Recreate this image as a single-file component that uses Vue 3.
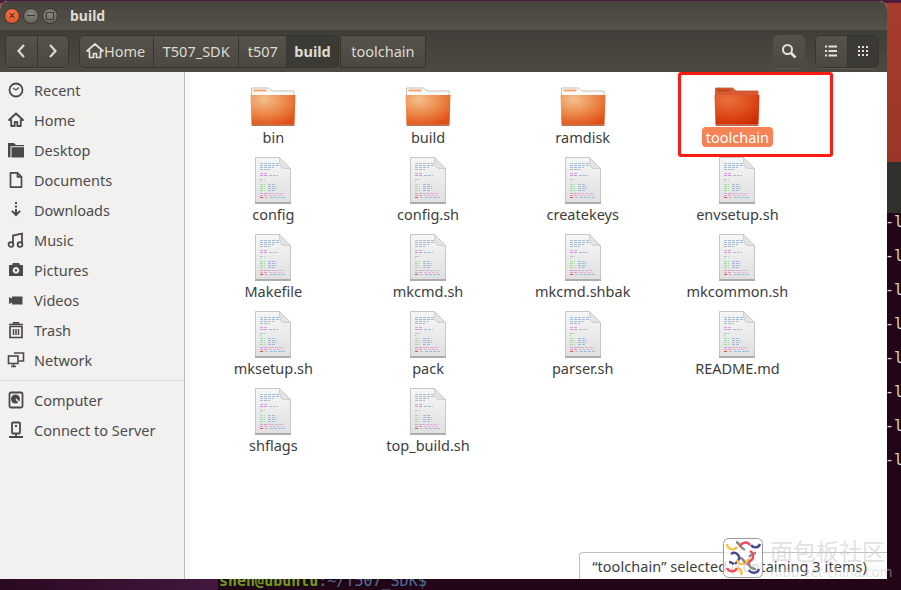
<script setup>
const places = [
  { name: 'Recent', icon: 'clock' },
  { name: 'Home', icon: 'home' },
  { name: 'Desktop', icon: 'desktop' },
  { name: 'Documents', icon: 'document' },
  { name: 'Downloads', icon: 'download' },
  { name: 'Music', icon: 'music' },
  { name: 'Pictures', icon: 'camera' },
  { name: 'Videos', icon: 'video' },
  { name: 'Trash', icon: 'trash' },
  { name: 'Network', icon: 'network' },
];
const devices = [
  { name: 'Computer', icon: 'disk' },
  { name: 'Connect to Server', icon: 'server' },
];
const crumbs = ['T507_SDK', 't507', 'build', 'toolchain'];

const files = [
  { name: 'bin', type: 'folder' },
  { name: 'build', type: 'folder' },
  { name: 'ramdisk', type: 'folder' },
  { name: 'toolchain', type: 'folder', selected: true },
  { name: 'config', type: 'doc' },
  { name: 'config.sh', type: 'doc' },
  { name: 'createkeys', type: 'doc' },
  { name: 'envsetup.sh', type: 'doc' },
  { name: 'Makefile', type: 'doc' },
  { name: 'mkcmd.sh', type: 'doc' },
  { name: 'mkcmd.shbak', type: 'doc' },
  { name: 'mkcommon.sh', type: 'doc' },
  { name: 'mksetup.sh', type: 'doc' },
  { name: 'pack', type: 'doc' },
  { name: 'parser.sh', type: 'doc' },
  { name: 'README.md', type: 'doc' },
  { name: 'shflags', type: 'doc' },
  { name: 'top_build.sh', type: 'doc' },
];

// little coloured code lines on the text file icon
const codeLines = [
  [5, 6, 20, '#a9bdd2'], [5, 8, 20, '#a3bbd6'], [5, 10, 14, '#a3bbd6'], [5, 12, 10, '#aeb8c6'],
  [5, 16, 8, '#dba0e0'], [5, 18, 8, '#d890de'], [14, 18, 9, '#a3bbd6'],
  [5, 22, 5, '#b8c4b8'], [5, 24, 1, '#a0d0a0'],
  [5, 27, 5, '#a5dca5'], [13, 27, 8, '#a3bbd6'], [5, 29, 5, '#a5dca5'], [13, 29, 9, '#a3bbd6'],
  [5, 31, 5, '#a5dca5'], [13, 31, 9, '#a3bbd6'], [5, 33, 5, '#a5dca5'], [13, 33, 8, '#a3bbd6'],
  [5, 36, 10, '#d8a0c4'], [16, 36, 13, '#d8b0d8'], [5, 38, 8, '#d8a0c4'], [14, 38, 14, '#eeb0d8'],
  [5, 40, 4, '#e85050'], [10, 40, 4, '#c0c0c0'], [15, 40, 15, '#98c0dc'],
];
const termRows = 8;
</script>

<template>
  <div class="desktop">
    <div class="wall-red"></div>
    <div class="wall-grey"></div>
    <div class="terminal">
      <div v-for="n in termRows" :key="n" class="term-row">-l</div>
    </div>
    <div class="prompt"><span class="p-user">shen@ubuntu</span><span class="p-path">:~/T507_SDK$</span></div>
    <div class="corner"></div>

    <div class="window">
      <header class="titlebar">
        <div class="dots">
          <span class="dot close">×</span>
          <span class="dot"><i class="minus"></i></span>
          <span class="dot"><i class="square"></i></span>
        </div>
        <span class="title">build</span>
      </header>

      <div class="toolbar">
        <div class="group nav">
          <button class="tool nav-btn">
            <svg width="12" height="16" viewBox="0 0 12 16"><path d="M9 2 3.500 8 9 14" fill="none" stroke="#dcd9d0" stroke-width="2.200"/></svg>
          </button>
          <button class="tool nav-btn">
            <svg width="12" height="16" viewBox="0 0 12 16"><path d="M3 2 8.500 8 3 14" fill="none" stroke="#dcd9d0" stroke-width="2.200"/></svg>
          </button>
        </div>
        <div class="crumbs">
          <div class="crumb home-crumb">
            <svg width="18" height="16" viewBox="0 0 18 16"><path d="M9 1 1 8h2.500v6.500h4v-4h3v4h4V8H17Z" fill="none" stroke="#e4e1d8" stroke-width="1.700" stroke-linejoin="round"/></svg>
            <span>Home</span>
          </div>
          <div
            v-for="c in crumbs"
            :key="c"
            class="crumb"
            :class="{ current: c === 'build', tail: c === 'toolchain' }"
          >{{ c }}</div>
        </div>
        <div class="spacer"></div>
        <button class="group tool search">
          <svg width="16" height="16" viewBox="0 0 16 16"><circle cx="6.500" cy="6.500" r="4.500" fill="none" stroke="#e4e1d8" stroke-width="2"/><path d="m10 10 4.500 4.500" stroke="#e4e1d8" stroke-width="2.600"/></svg>
        </button>
        <div class="group views">
          <button class="tool view">
            <svg width="12" height="12" viewBox="0 0 12 12" fill="#e4e1d8"><rect y="0.500" width="2" height="2"/><rect x="3.500" y="0.500" width="8.500" height="2"/><rect y="5" width="2" height="2"/><rect x="3.500" y="5" width="8.500" height="2"/><rect y="9.500" width="2" height="2"/><rect x="3.500" y="9.500" width="8.500" height="2"/></svg>
          </button>
          <button class="tool view active">
            <svg width="12" height="12" viewBox="0 0 12 12" fill="#e4e1d8"><rect x="1" y="1" width="2" height="2"/><rect x="5" y="1" width="2" height="2"/><rect x="9" y="1" width="2" height="2"/><rect x="1" y="5" width="2" height="2"/><rect x="5" y="5" width="2" height="2"/><rect x="9" y="5" width="2" height="2"/><rect x="1" y="9" width="2" height="2"/><rect x="5" y="9" width="2" height="2"/><rect x="9" y="9" width="2" height="2"/></svg>
          </button>
        </div>
      </div>

      <div class="body">
        <aside class="sidebar">
          <div v-for="p in places" :key="p.name" class="place">
            <svg class="place-icon" width="18" height="18" viewBox="0 0 18 18">
              <g v-if="p.icon === 'clock'">
                <circle cx="9" cy="9" r="6.500" fill="none" stroke="#4a4a4a" stroke-width="1.800"/>
                <path d="M9 9 6 7M9 9l3-2.500" stroke="#4a4a4a" stroke-width="1.200" fill="none"/>
              </g>
              <path v-else-if="p.icon === 'home'" d="M9 2.500 2 9h2.200v6h3.500v-4h2.600v4h3.500V9H16Z" fill="none" stroke="#4a4a4a" stroke-width="1.800" stroke-linejoin="round"/>
              <g v-else-if="p.icon === 'desktop'" fill="#4a4a4a">
                <path d="M1 2h6l2 2h8v1.200H3.500v11H1Z"/>
                <rect x="4.500" y="6.200" width="12.500" height="10.300"/>
              </g>
              <path v-else-if="p.icon === 'document'" d="M3.500 1.800h7l4 4v10.400h-11Zm7 0v4h4" fill="none" stroke="#4a4a4a" stroke-width="1.700" stroke-linejoin="round"/>
              <g v-else-if="p.icon === 'download'" fill="#4a4a4a">
                <rect x="8" y="1" width="2" height="2"/><rect x="8" y="4.500" width="2" height="2"/>
                <path d="M8 8h2v3.500l2.500-2.300 1.300 1.300L9 15.500 4.200 10.500l1.300-1.300L8 11.500Z"/>
              </g>
              <g v-else-if="p.icon === 'music'">
                <path d="M6 13V4.500l9-2V13" fill="none" stroke="#4a4a4a" stroke-width="1.800"/>
                <circle cx="4" cy="13.500" r="2.400" fill="none" stroke="#4a4a4a" stroke-width="1.800"/>
                <circle cx="13" cy="13.500" r="2.400" fill="none" stroke="#4a4a4a" stroke-width="1.800"/>
              </g>
              <path v-else-if="p.icon === 'camera'" fill="#4a4a4a" fill-rule="evenodd" d="M2 4h3l1-2h6l1 2h3v11H2ZM9 6a3.300 3.300 0 1 0 .001 0Zm0 2a1.300 1.300 0 1 1-.001 0Z"/>
              <path v-else-if="p.icon === 'video'" fill="#4a4a4a" d="M2 6l3 1.500V5.500h10.500v8H5v-2L2 13Z"/>
              <g v-else-if="p.icon === 'trash'">
                <path d="M3 5.500h12v11H3Z" fill="none" stroke="#4a4a4a" stroke-width="1.700"/>
                <path d="M2 3.500h14M6.500 3.500V1.800h5v1.700M6.500 8v6M9 8v6M11.500 8v6" fill="none" stroke="#4a4a4a" stroke-width="1.500"/>
              </g>
              <g v-else-if="p.icon === 'network'" fill="none" stroke="#4a4a4a" stroke-width="1.600">
                <rect x="1.500" y="5" width="9.500" height="7.500"/>
                <path d="M4 15.500h5M6.500 12.500v3"/>
                <path d="M7 2h9.500v8H12"/>
              </g>
            </svg>
            <span>{{ p.name }}</span>
          </div>
          <div class="divider"></div>
          <div v-for="p in devices" :key="p.name" class="place">
            <svg class="place-icon" width="18" height="18" viewBox="0 0 18 18">
              <g v-if="p.icon === 'disk'">
                <rect x="2.500" y="1.500" width="13" height="15" rx="1.500" fill="none" stroke="#4a4a4a" stroke-width="1.800"/>
                <circle cx="8.500" cy="8" r="4.500" fill="#4a4a4a"/>
                <path d="M9 8l3.500 4" stroke="#f2f1f0" stroke-width="1.300"/>
              </g>
              <g v-else>
                <rect x="5" y="1.500" width="8" height="11" rx="1" fill="none" stroke="#4a4a4a" stroke-width="1.800"/>
                <rect x="8" y="4" width="2" height="2" fill="#4a4a4a"/>
                <path d="M9 12.500v2.500M2 16h14" stroke="#4a4a4a" stroke-width="1.800"/>
              </g>
            </svg>
            <span>{{ p.name }}</span>
          </div>
        </aside>

        <main class="files">
          <div v-for="f in files" :key="f.name" class="file" :class="{ selected: f.selected }">
            <div class="thumb">
              <svg v-if="f.type === 'folder'" class="folder" width="46" height="39" viewBox="0 0 46 39">
                <defs>
                  <radialGradient id="fBody" cx="0.3" cy="0.15" r="0.95">
                    <stop offset="0" stop-color="#f4c08e"/>
                    <stop offset="0.5" stop-color="#ec8a4c"/>
                    <stop offset="1" stop-color="#e04e14"/>
                  </radialGradient>
                  <radialGradient id="fBodySel" cx="0.3" cy="0.15" r="0.95">
                    <stop offset="0" stop-color="#e8703e"/>
                    <stop offset="0.5" stop-color="#e0501f"/>
                    <stop offset="1" stop-color="#cd2a04"/>
                  </radialGradient>
                </defs>
                <path d="M1.500 1h17l3.500 3h22v5h-42.500Z" :fill="f.selected ? '#d85a30' : '#fbfaf7'" :stroke="f.selected ? '#c4502a' : '#b5b1a8'" stroke-width="0.800"/>
                <rect x="3.500" y="2.500" width="13" height="2" :fill="f.selected ? '#c2421a' : '#f2a476'"/>
                <path d="M0.500 8h45l-1 29.500H1.500Z" :fill="f.selected ? 'url(#fBodySel)' : 'url(#fBody)'"/>
                <path d="M1.500 37.500h43l-0.300 1.200H1.800Z" fill="#a83a12"/>
              </svg>
              <svg v-else class="doc" width="36" height="47" viewBox="0 0 36 47">
                <defs>
                  <linearGradient id="dPage" x1="0" y1="0" x2="0" y2="1">
                    <stop offset="0" stop-color="#f6f6f6"/>
                    <stop offset="1" stop-color="#e0e0e0"/>
                  </linearGradient>
                </defs>
                <path d="M0.500 0.500h24l11 11v34h-35Z" fill="url(#dPage)" stroke="#c6c6c6"/>
                <path d="M24.500 0.500c0 6 1 9 2 10s6 1 9 1Z" fill="#e4e4e4" stroke="#cacaca"/>
                <rect x="0" y="45" width="36" height="2" fill="#adadad"/>
                <line
                  v-for="(l, i) in codeLines"
                  :key="i"
                  :x1="l[0]"
                  :x2="l[0] + l[2]"
                  :y1="l[1] + 0.5"
                  :y2="l[1] + 0.5"
                  :stroke="l[3]"
                  stroke-dasharray="3 1"
                />
              </svg>
            </div>
            <span class="label">{{ f.name }}</span>
          </div>
        </main>
      </div>

      <div class="status">“toolchain” selected (containing 3 items)</div>
    </div>

    <div class="annotation"></div>

    <div class="watermark">
      <div class="logo">
        <svg width="40" height="40" viewBox="0 0 40 40" fill="none" stroke-width="2.400">
          <rect x="0.500" y="0.500" width="39" height="39" rx="5" fill="rgba(255,255,255,0.8)" stroke="#9a9a9a" stroke-width="1"/>
          <path d="M4 6a5.500 5.500 0 0 0 10 3" stroke="#f5c445"/>
          <path d="M13 4c4 1 4 6 9 8" stroke="#8a8a8a"/>
          <path d="M17 9a5.500 5.500 0 0 1 10-2" stroke="#ee4d5f"/>
          <path d="M28 7a5 5 0 0 0 9-1" stroke="#4a4a8a"/>
          <path d="M8 16a5 5 0 0 1 7 7l-3 3" stroke="#4a4a8a"/>
          <path d="M33 15c-3 0-5 2-7 4" stroke="#8a8a8a"/>
          <path d="M14 22a5 5 0 0 0 8 3l4-4" stroke="#f5c445"/>
          <path d="M27 13a5.500 5.500 0 0 1 0 10l-3 4" stroke="#ee4d5f"/>
          <path d="M17 20c3 0 4 3 5 5M26 25c0 4 3 6 7 6" stroke="#8a8a8a"/>
          <path d="M4 30a5.500 5.500 0 0 0 10 0" stroke="#ee4d5f"/>
          <path d="M15 30a5 5 0 0 1 3 7" stroke="#f5c445"/>
          <path d="M26 32a5.500 5.500 0 0 0 10-1" stroke="#4a4a8a"/>
          <path d="M6 24c2 0 3 1 5 2" stroke="#4a4a8a"/>
        </svg>
      </div>
      <div class="wm-text">
        <div class="wm-cn">面包板社区</div>
        <div class="wm-en">mbb.eet-china.com</div>
      </div>
    </div>
  </div>
</template>

<style scoped>
.desktop {
  position: relative;
  width: 901px;
  height: 590px;
  overflow: hidden;
  background: #220517;
  font-family: "Noto Sans", "Open Sans", sans-serif;
}
.wall-red {
  position: absolute;
  top: 0;
  left: 0;
  right: 0;
  height: 162px;
  background: linear-gradient(180deg, #4e1a3e 0, #4e1a3e 3px, #a83c2c 3px, #9c3628 162px);
}
.wall-grey {
  position: absolute;
  top: 162px;
  left: 0;
  right: 0;
  height: 51px;
  background: #31302c;
}
.terminal {
  position: absolute;
  top: 205px;
  left: 885px;
  color: #d8d4cc;
  font: 15px/34px "DejaVu Sans Mono", monospace;
  white-space: pre;
}
.term-row {
  height: 34px;
}
.prompt {
  position: absolute;
  left: 219px;
  top: 571px;
  font: bold 15px/20px "DejaVu Sans Mono", monospace;
}
.p-user { color: #6f9a1e; }
.p-path { color: #4f6f96; font-weight: normal; }
.corner {
  position: absolute;
  left: 0;
  top: 579px;
  width: 218px;
  height: 11px;
  background: linear-gradient(90deg, #2a0a20, #43173f);
}

.window {
  position: absolute;
  top: 1px;
  left: 0;
  width: 887px;
  height: 578px;
  display: flex;
  flex-direction: column;
  background: #fff;
  border-radius: 8px 8px 0 0;
  overflow: hidden;
}

.titlebar {
  height: 29px;
  flex: none;
  display: flex;
  align-items: center;
  padding-left: 4px;
  background: linear-gradient(180deg, #47443d, #55524a);
  font-size: 14px;
}
.dots {
  display: flex;
  gap: 3px;
  margin-right: 12px;
}
.dot {
  width: 16px;
  height: 16px;
  border-radius: 50%;
  display: flex;
  align-items: center;
  justify-content: center;
  background: radial-gradient(circle at 50% 35%, #8a877e, #5f5c54);
  border: 1px solid #3a3833;
  box-sizing: border-box;
}
.dot.close {
  background: radial-gradient(circle at 50% 35%, #f27a4a, #d8481c);
  color: #4a2214;
  font-size: 12px;
  line-height: 1;
}
.minus {
  width: 8px;
  height: 1.500px;
  background: #3d3b35;
}
.square {
  width: 6px;
  height: 6px;
  border: 1px solid #3d3b35;
}
.title {
  color: #dfdbd2;
  font-weight: 700;
  font-size: 14px;
}

.toolbar {
  height: 42px;
  flex: none;
  display: flex;
  align-items: center;
  padding: 0 8px 0 5px;
  background: linear-gradient(180deg, #403e38, #4c4a42);
  color: #dfdbd2;
  font-size: 14.500px;
}
.group {
  display: flex;
  height: 33px;
  box-sizing: border-box;
  border: 1px solid #37352f;
  border-radius: 5px;
  overflow: hidden;
  box-shadow: 0 1px 0 rgba(255, 255, 255, 0.08);
}
.tool {
  background: linear-gradient(180deg, #55524b, #4a4841);
  border: 0;
  padding: 0;
  display: flex;
  align-items: center;
  justify-content: center;
}
.nav { width: 64px; }
.nav-btn { flex: 1; }
.nav-btn + .nav-btn { border-left: 1px solid #37352f; }
.crumbs {
  display: flex;
  height: 33px;
  margin-left: 10px;
}
.crumb {
  display: flex;
  align-items: center;
  justify-content: center;
  box-sizing: border-box;
  background: linear-gradient(180deg, #55524b, #4a4841);
  border: 1px solid #37352f;
  border-left: 0;
  padding: 0 8.500px;
}
.home-crumb {
  border-left: 1px solid #37352f;
  border-radius: 5px 0 0 5px;
  gap: 0;
  padding: 0 8px 0 6px;
}
.crumb.current {
  background: #3c3a34;
  font-weight: 700;
  border-radius: 0 5px 5px 0;
  padding: 0 7px;
}
.crumb.tail {
  margin-left: 1px;
  border-left: 1px solid #37352f;
  padding: 0 10.500px;
}
.spacer { flex: 1; }
.search {
  width: 32px;
  margin-right: 10px;
}
.views { width: 64px; }
.view { flex: 1; }
.view.active {
  background: #3c3a34;
  border-left: 1px solid #37352f;
}

.body {
  flex: 1;
  display: flex;
  min-height: 0;
}
.sidebar {
  width: 185px;
  flex: none;
  box-sizing: border-box;
  background: #f2f1f0;
  border-right: 1px solid #bcbab6;
  padding: 3px 0 0 7px;
  color: #4c4c4c;
  font-size: 14.500px;
}
.place {
  height: 30px;
  display: flex;
  align-items: center;
}
.place-icon {
  flex: none;
  margin-right: 9px;
}
.divider {
  height: 1px;
  margin: 5px 0 4px -7px;
  background: #dcdad8;
}

.files {
  flex: 1;
  border-left: 5px solid #f8f8f7;
  padding: 13px 0 0 6px;
  display: grid;
  grid-template-columns: repeat(4, 154.700px);
  grid-auto-rows: 77px;
  align-content: start;
  background: #fff;
  color: #3d3d3d;
  font-size: 14.500px;
}
.file {
  display: flex;
  flex-direction: column;
  align-items: center;
}
.thumb {
  height: 41px;
  display: flex;
  align-items: flex-end;
  justify-content: center;
}
.doc { margin-bottom: -1px; }
.label {
  margin-top: 1px;
  line-height: 20px;
  padding: 0 4px;
  border-radius: 4px;
}
.selected .label {
  background: #f48456;
  color: #fff;
}

.status {
  position: absolute;
  right: 0;
  bottom: 0;
  height: 26px;
  padding: 0 20px 0 12px;
  display: flex;
  align-items: center;
  background: #fff;
  border: 1px solid #c4c2be;
  border-width: 1px 0 0 1px;
  border-radius: 4px 0 0 0;
  color: #3d3d3d;
  font-size: 14.500px;
  letter-spacing: 0.070px;
}

.annotation {
  position: absolute;
  left: 678px;
  top: 72px;
  width: 155px;
  height: 85px;
  box-sizing: border-box;
  border: 3px solid #ff1a12;
  border-radius: 3px;
}

.watermark {
  position: absolute;
  left: 723px;
  top: 538px;
  display: flex;
  gap: 7px;
}
.logo {
  width: 40px;
  height: 40px;
}
.wm-text {
  color: rgba(200, 200, 200, 0.55);
  white-space: nowrap;
}
.wm-cn {
  font: 23px/24px "Noto Sans CJK SC", sans-serif;
}
.wm-en {
  margin-top: 2px;
  font-size: 13.500px;
  line-height: 16px;
}
</style>
